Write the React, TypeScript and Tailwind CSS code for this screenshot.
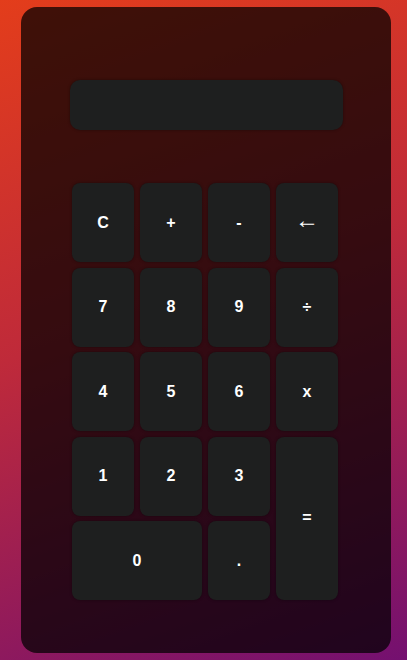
const keys: { label: string; cls?: string }[] = [
  { label: "C" },
  { label: "+" },
  { label: "-" },
  { label: "←", cls: "font-normal text-[24px] leading-none pb-[6px]" },
  { label: "7" },
  { label: "8" },
  { label: "9" },
  { label: "÷" },
  { label: "4" },
  { label: "5" },
  { label: "6" },
  { label: "x" },
  { label: "1" },
  { label: "2" },
  { label: "3" },
  { label: "=", cls: "row-span-2 font-bold text-[16px]" },
  { label: "0", cls: "col-span-2 font-bold text-[16px]" },
  { label: "." },
];

const App = () => {
  return (
    <div className="w-[407px] h-[660px] overflow-hidden bg-[linear-gradient(160deg,#e33d1b_0%,#bf2a3a_45%,#741070_100%)] pt-[7px] pl-[21px] font-['Liberation_Sans',Arial,sans-serif]">
      <div className="w-[370px] h-[646px] rounded-[16px] bg-black/[0.72] pt-[73px] pl-[49px]">
        <div className="w-[273px] h-[50px] rounded-[10px] bg-[#1e1f1f] shadow-[0_0_3px_rgba(0,0,0,0.4)]" />
        <div className="mt-[53px] ml-[2px] grid grid-cols-[repeat(4,62px)] auto-rows-[79px] gap-x-[6px] gap-y-[5.5px]">
          {keys.map((k) => (
            <button
              key={k.label}
              className={`rounded-[8px] bg-[#1e1f1f] text-white flex items-center justify-center shadow-[0_0_3px_rgba(0,0,0,0.4)] ${k.cls ?? "font-bold text-[16px]"}`}
            >
              {k.label}
            </button>
          ))}
        </div>
      </div>
    </div>
  );
};

export default App;
